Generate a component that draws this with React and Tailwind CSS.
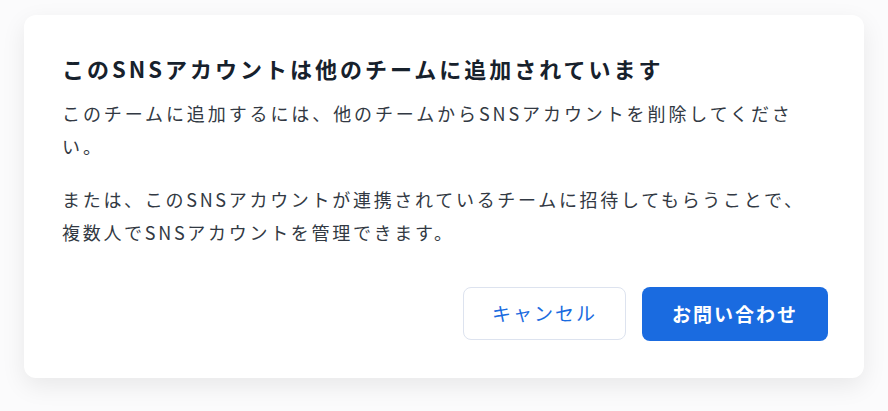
import React from 'react';

const App = () => {
  return (
    <div
      className="min-h-screen bg-[#fbfbfc] px-6 pt-[15px]"
      style={{ fontFamily: '"Noto Sans CJK JP", "Noto Sans", sans-serif' }}
    >
      <div className="w-[840px] rounded-xl bg-white pl-[38px] pr-[36px] pt-[38px] pb-[37px] shadow-[0_8px_24px_rgba(0,0,0,0.08)]">
        <h1 className="text-[22px] font-bold leading-[30px] tracking-[3px] text-[#17212c]">
          このSNSアカウントは他のチームに追加されています
        </h1>
        <p className="mt-[14px] text-[18px] leading-[33px] tracking-[2.9px] text-[#323943]">
          このチームに追加するには、他のチームからSNSアカウントを削除してくださ
          <br />
          い。
        </p>
        <p className="mt-[20px] text-[18px] leading-[33px] tracking-[2.7px] text-[#323943]">
          または、このSNSアカウントが連携されているチームに招待してもらうことで、
          <br />
          複数人でSNSアカウントを管理できます。
        </p>
        <div className="mt-[38px] flex justify-end gap-4">
          <button className="h-[53px] w-[163px] rounded-lg border border-[#dde3ef] bg-white text-[19px] tracking-[2px] text-[#1a6be0]">
            キャンセル
          </button>
          <button className="h-[54px] w-[186px] rounded-lg bg-[#1a6be0] text-[19px] font-bold tracking-[2px] text-white">
            お問い合わせ
          </button>
        </div>
      </div>
    </div>
  );
};

export default App;
